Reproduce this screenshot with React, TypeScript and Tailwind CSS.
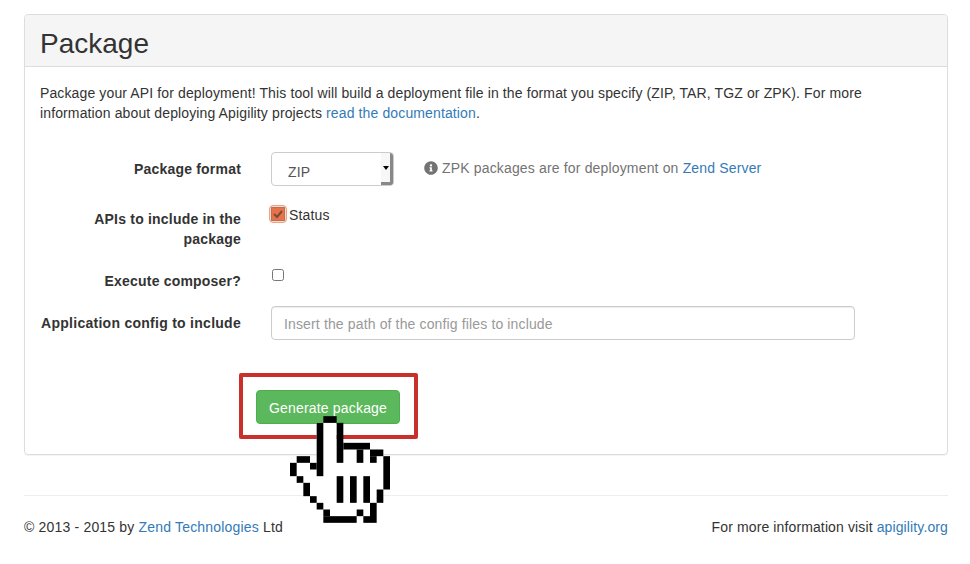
import { FaInfoCircle } from 'react-icons/fa';

const handPixels: [number, number, number, number][] = [
  [5, 0, 2, 1], [4, 1, 1, 8], [7, 1, 1, 6], [8, 4, 4, 1], [10, 5, 1, 2], [12, 5, 2, 1], [12, 6, 1, 1],
  [14, 6, 1, 5], [13, 11, 1, 2], [12, 13, 1, 3], [11, 15, 1, 1], [10, 14, 1, 1], [5, 15, 5, 1], [5, 14, 1, 1],
  [4, 13, 1, 1], [3, 12, 1, 1], [2, 10, 1, 2], [1, 9, 1, 1], [0, 7, 1, 2], [1, 6, 2, 1], [3, 7, 1, 1],
  [7, 9, 1, 4], [9, 9, 1, 4], [11, 9, 1, 4],
];

function PixelHand() {
  return (
    <svg className="absolute left-[34px] top-[26px] h-[107px] w-[100px]" viewBox="0 0 15 16">
      <path
        d="M5 1h2v4h7v2h1v4h-1v2h-1v3H5v-2H4v-1H3v-2H2V9H1V7h3V1z"
        fill="#fff"
      />
      {handPixels.map(([x, y, w, h], i) => (
        <rect key={i} x={x} y={y} width={w} height={h} fill="#000" />
      ))}
    </svg>
  );
}

function FormRow({ label, className, children }: { label: React.ReactNode; className: string; children: React.ReactNode }) {
  return (
    <div className={`flex gap-[30px] ${className}`}>
      <label className="w-[201px] shrink-0 text-right font-bold leading-5 tracking-[0.2px]">{label}</label>
      <div className="min-w-0 flex-1">{children}</div>
    </div>
  );
}

export default function App() {
  return (
    <div className="h-[564px] w-[970px] overflow-hidden bg-white pl-[24px] pr-[22px] pt-[14px] font-['Liberation_Sans',Arial,sans-serif] text-[14px] leading-5 tracking-[0.18px] text-[#333]">
      <section className="h-[441px] w-[924px] rounded border border-[#ddd] shadow-[0_1px_1px_rgba(0,0,0,0.05)]">
        <header className="h-[52px] rounded-t border-b border-[#ddd] bg-[#f5f5f5] px-[15px] pt-[13px]">
          <h3 className="text-[28px] leading-[31px] font-normal tracking-normal">Package</h3>
        </header>
        <div className="px-[15px] pt-[16px]">
          <p className="leading-5 tracking-[0.125px]">
            Package your API for deployment! This tool will build a deployment file in the format you specify (ZIP, TAR, TGZ or ZPK). For more
            <br />
            information about deploying Apigility projects <a className="text-[#337ab7]" href="#">read the documentation</a>.
          </p>

          <FormRow label="Package format" className="mt-[29px] h-[34px] items-center">
            <div className="flex items-center">
              <div className="flex h-[34px] w-[123px] overflow-hidden rounded border border-[#ccc] bg-white">
                <span className="flex-1 pl-4 pt-[9px] text-[#555]">ZIP</span>
                <span className="flex w-[12px] items-center justify-center border-r-[3px] border-b-[3px] border-r-[#888] border-b-[#888] bg-[#f7f7f7]">
                  <span className="h-0 w-0 border-x-[3px] border-t-[4px] border-x-transparent border-t-black" />
                </span>
              </div>
              <span className="relative top-[-1px] ml-[30px] flex items-center gap-[4px] text-[#737373]">
                <FaInfoCircle className="h-[14px] w-[14px]" />
                <span className="tracking-[0.16px]">ZPK packages are for deployment on <a className="text-[#337ab7]" href="#">Zend Server</a></span>
              </span>
            </div>
          </FormRow>

          <FormRow label={<>APIs to include in the<br />package</>} className="mt-[23px] h-[40px]">
            <div className="-ml-[2px] -mt-[4px] flex items-start">
              <span className="flex h-[18px] w-[18px] items-center justify-center rounded-[4px] border border-[#f0a080] bg-[#ffd9c8]">
                <svg viewBox="0 0 14 14" className="h-[14px] w-[14px]">
                  <rect x="0.5" y="0.5" width="13" height="13" fill="#e8734a" stroke="#6b4030" strokeDasharray="1 1" />
                  <path d="M3 7l3 3 5-6" fill="none" stroke="#7a4a3a" strokeWidth="2" />
                </svg>
              </span>
              <span className="ml-[2px] leading-5">Status</span>
            </div>
          </FormRow>

          <FormRow label="Execute composer?" className="mt-[22px] h-[20px]">
            <input type="checkbox" className="ml-px mt-[-2px] block h-[12px] w-[12px]" />
          </FormRow>

          <FormRow label={<span className="tracking-[0.27px]">Application config to include</span>} className="mt-[15px] h-[34px] items-center">
            <input
              className="block h-[34px] w-[584px] rounded border border-[#ccc] bg-white px-3 pt-[1px] tracking-[0.14px] text-[#555] shadow-[inset_0_1px_1px_rgba(0,0,0,0.075)] placeholder:text-[#999]"
              placeholder="Insert the path of the config files to include"
            />
          </FormRow>

          <div className="relative ml-[216px] mt-[50px] w-[144px]">
            <button className="block h-[34px] w-[144px] rounded border border-[#4cae4c] bg-[#5cb85c] pt-px text-center text-white">
              Generate package
            </button>
            <div className="pointer-events-none absolute left-[-17px] top-[-17px] h-[66px] w-[179px] rounded-[2px] border-[4px] border-[#c9302c]" />
            <PixelHand />
          </div>
        </div>
      </section>
      <footer className="mt-[40px] flex justify-between border-t border-[#eee] pt-[21px]">
        <span>© 2013 - 2015 by <a className="text-[#337ab7]" href="#">Zend Technologies</a> Ltd</span>
        <span className="tracking-[0.12px]">For more information visit <a className="text-[#337ab7]" href="#">apigility.org</a></span>
      </footer>
    </div>
  );
}
